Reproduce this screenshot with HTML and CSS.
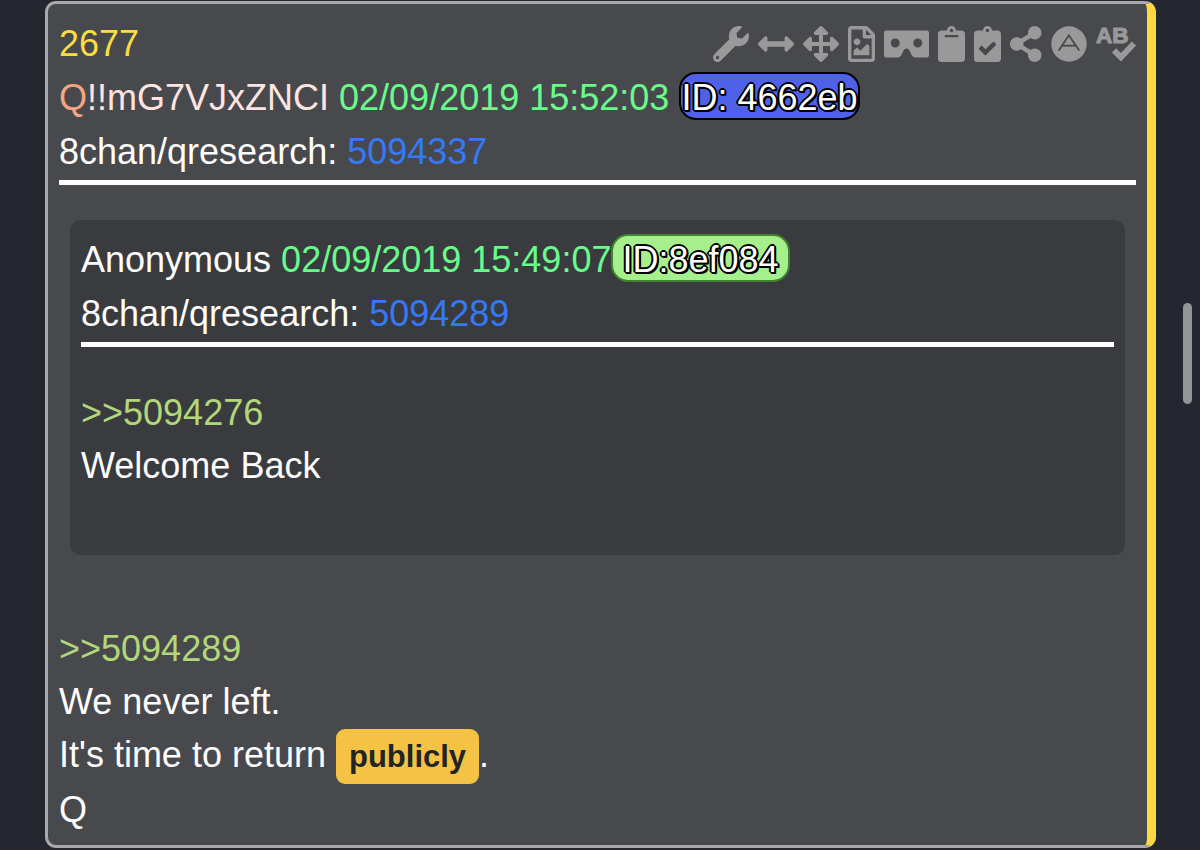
FILE: index.html
```
<!DOCTYPE html>
<html lang="en">
<head>
    <meta charset="UTF-8">
    <meta name="viewport" content="width=device-width, initial-scale=1.0">
    <title>2677</title>
    <link rel="stylesheet" href="styles.css">
</head>
<body>
    <main>
        <article class="post">
            <header class="post-header">
                <div class="top-row">
                    <a class="number" href="#">2677</a>
                    <div class="tools">
                        <button type="button" aria-label="Tools">
                            <svg viewBox="0 0 512 512"><path d="M507.73 109.1c-2.24-9.03-13.54-12.09-20.12-5.51l-74.36 74.36-67.88-11.31-11.31-67.88 74.36-74.36c6.62-6.62 3.43-17.9-5.66-20.16-47.38-11.74-99.55.91-136.58 37.93-39.64 39.64-50.55 97.1-34.05 147.2L18.74 402.76c-24.99 24.99-24.99 65.51 0 90.5 24.99 24.99 65.51 24.99 90.5 0l213.21-213.21c50.12 16.71 107.47 5.68 147.37-34.22 37.07-37.07 49.7-89.32 37.91-136.73zM64 472c-13.25 0-24-10.75-24-24 0-13.26 10.75-24 24-24s24 10.74 24 24c0 13.25-10.75 24-24 24z"/></svg>
                        </button>
                        <button type="button" aria-label="Widen">
                            <svg viewBox="0 0 512 512"><path d="M377.941 169.941V216H134.059v-46.059c0-21.382-25.851-32.09-40.971-16.971L7.029 239.029c-9.373 9.373-9.373 24.568 0 33.941l86.059 86.059c15.119 15.119 40.971 4.411 40.971-16.971V296h243.882v46.059c0 21.382 25.851 32.09 40.971 16.971l86.059-86.059c9.373-9.373 9.373-24.568 0-33.941l-86.059-86.059c-15.119-15.12-40.971-4.412-40.971 16.97z"/></svg>
                        </button>
                        <button type="button" aria-label="Expand">
                            <svg viewBox="0 0 512 512"><path d="M352.201 425.775l-79.196 79.196c-9.373 9.373-24.568 9.373-33.941 0l-79.196-79.196c-15.119-15.119-4.411-40.971 16.971-40.97h51.162L228 284H127.196v51.162c0 21.382-25.851 32.09-40.971 16.971L7.029 272.937c-9.373-9.373-9.373-24.569 0-33.941L86.225 159.8c15.119-15.119 40.971-4.411 40.971 16.971V228H228V127.196h-51.23c-21.382 0-32.09-25.851-16.971-40.971l79.196-79.196c9.373-9.373 24.568-9.373 33.941 0l79.196 79.196c15.119 15.119 4.411 40.971-16.971 40.971h-51.162V228h100.804v-51.162c0-21.382 25.851-32.09 40.97-16.971l79.196 79.196c9.373 9.373 9.373 24.569 0 33.941L425.773 352.2c-15.119 15.119-40.971 4.411-40.97-16.971V284H284v100.804h51.23c21.382 0 32.09 25.851 16.971 40.971z"/></svg>
                        </button>
                        <button type="button" aria-label="Image">
                            <svg viewBox="0 0 384 512"><path d="M369.9 97.9L286 14C277 5 264.8-.1 252.1-.1H48C21.5 0 0 21.5 0 48v416c0 26.5 21.5 48 48 48h288c26.5 0 48-21.5 48-48V131.9c0-12.7-5.1-25-14.1-34zM332.1 128H256V51.9l76.1 76.1zM48 464V48h160v104c0 13.3 10.7 24 24 24h104v288H48zm32-48h224V288l-23.5-23.5c-4.7-4.7-12.3-4.7-17 0L176 352l-39.5-39.5c-4.7-4.7-12.3-4.7-17 0L80 352v64zm48-240c-26.5 0-48 21.5-48 48s21.5 48 48 48 48-21.5 48-48-21.5-48-48-48z"/></svg>
                        </button>
                        <button type="button" aria-label="Viewer">
                            <svg viewBox="0 0 640 512"><path d="M608 64H32C14.33 64 0 78.33 0 96v320c0 17.67 14.33 32 32 32h160.22c25.19 0 48.03-14.77 58.36-37.74l27.74-61.64C286.21 331.08 302.35 320 320 320s33.79 11.08 41.68 28.62l27.74 61.64C399.75 433.23 422.6 448 447.78 448H608c17.67 0 32-14.33 32-32V96c0-17.67-14.33-32-32-32zM160 304c-35.35 0-64-28.65-64-64s28.65-64 64-64 64 28.65 64 64-28.65 64-64 64zm320 0c-35.35 0-64-28.65-64-64s28.65-64 64-64 64 28.65 64 64-28.65 64-64 64z"/></svg>
                        </button>
                        <button type="button" aria-label="Copy">
                            <svg viewBox="0 0 384 512"><path d="M384 112v352c0 26.51-21.49 48-48 48H48c-26.51 0-48-21.49-48-48V112c0-26.51 21.49-48 48-48h80c0-35.29 28.71-64 64-64s64 28.71 64 64h80c26.51 0 48 21.49 48 48zM192 40c-13.255 0-24 10.745-24 24s10.745 24 24 24 24-10.745 24-24-10.745-24-24-24m96 114v-20a6 6 0 0 0-6-6H102a6 6 0 0 0-6 6v20a6 6 0 0 0 6 6h180a6 6 0 0 0 6-6z"/></svg>
                        </button>
                        <button type="button" aria-label="Select">
                            <svg viewBox="0 0 384 512"><path d="M336 64h-80c0-35.3-28.7-64-64-64s-64 28.7-64 64H48C21.5 64 0 85.5 0 112v352c0 26.5 21.5 48 48 48h288c26.5 0 48-21.5 48-48V112c0-26.5-21.5-48-48-48zM192 40c13.3 0 24 10.7 24 24s-10.7 24-24 24-24-10.7-24-24 10.7-24 24-24zm121.2 231.8l-143 141.8c-4.7 4.7-12.3 4.6-17-.1l-82.6-83.3c-4.7-4.7-4.6-12.3.1-17L99.1 285c4.7-4.7 12.3-4.6 17 .1l46 46.4 106-105.2c4.7-4.7 12.3-4.6 17 .1l28.2 28.4c4.7 4.8 4.6 12.3-.1 17z"/></svg>
                        </button>
                        <button type="button" aria-label="Share">
                            <svg viewBox="0 0 448 512"><path d="M352 320c-22.608 0-43.387 7.819-59.79 20.895l-102.486-64.054a96.551 96.551 0 0 0 0-41.683l102.486-64.054C308.613 184.181 329.392 192 352 192c53.019 0 96-42.981 96-96S405.019 0 352 0s-96 42.981-96 96c0 7.158.79 14.13 2.276 20.841L155.79 180.895C139.387 167.819 118.608 160 96 160c-53.019 0-96 42.981-96 96s42.981 96 96 96c22.608 0 43.387-7.819 59.79-20.895l102.486 64.054A96.301 96.301 0 0 0 256 416c0 53.019 42.981 96 96 96s96-42.981 96-96-42.981-96-96-96z"/></svg>
                        </button>
                        <button type="button" aria-label="Archive">
                            <svg viewBox="0 0 512 512">
                                <circle cx="256" cy="256" r="252"/>
                                <g class="mark-lines">
                                    <polyline points="110,350 254,132 402,350"/>
                                    <line x1="160" y1="280" x2="350" y2="280"/>
                                </g>
                            </svg>
                        </button>
                        <button type="button" aria-label="Spelling">
                            <svg viewBox="0 0 576 512">
                                <text class="spell" x="0" y="244">AB</text>
                                <polyline class="tick" points="256,346 355,446 540,248"/>
                            </svg>
                        </button>
                    </div>
                </div>
                <div><span class="name">Q</span><span class="trip">!!mG7VJxZNCI</span> <time class="date">02/09/2019 15:52:03</time> <span class="id id-blue">ID: 4662eb</span></div>
                <div>8chan/qresearch: <a class="link" href="#">5094337</a></div>
            </header>

            <section class="quoted">
                <header class="post-header">
                    <div>Anonymous <time class="date">02/09/2019 15:49:07</time><span class="id id-green">ID:8ef084</span></div>
                    <div>8chan/qresearch: <a class="link" href="#">5094289</a></div>
                </header>
                <div class="text">
                    <a class="ref" href="#">&gt;&gt;5094276</a>
                    <p>Welcome Back</p>
                </div>
            </section>

            <div class="text">
                <a class="ref" href="#">&gt;&gt;5094289</a>
                <p>We never left.</p>
                <p>It's time to return <mark>publicly</mark>.</p>
                <p>Q</p>
            </div>
        </article>
    </main>
    <div class="scroll-thumb"></div>
</body>
</html>
```
FILE: styles.css
```
*, *::before, *::after
{
    box-sizing: border-box;
    margin: 0;
    padding: 0;
}
body
{
    background-color: #24272f;
    color: #fdfdfd;
    font-family: "Liberation Sans", Arial, sans-serif;
    font-size: 36px;
    line-height: 53px;
}
a
{
    text-decoration: none;
}
main
{
    padding: 1px 44px 2px 45px;
}
.post
{
    background-color: #48494d;
    border: 3px solid #a9a8ac;
    border-right: 9px solid #fdd845;
    border-radius: 11px;
    padding: 13px 11px 9px;
}
.post-header
{
    line-height: 54px;
    border-bottom: 5px solid #fff;
    padding-bottom: 1px;
}
.top-row
{
    display: flex;
    justify-content: space-between;
    align-items: center;
}
.number
{
    color: #fbdc43;
}
.tools
{
    display: flex;
    align-items: center;
    gap: 9px;
}
.tools button
{
    display: flex;
    background: none;
    border: none;
    cursor: pointer;
}
.tools svg
{
    height: 36px;
    fill: #999;
    overflow: visible;
}
.tools .mark-lines
{
    fill: none;
    stroke: #48494d;
    stroke-width: 26px;
}
.tools .spell
{
    font-family: "Liberation Sans", Arial, sans-serif;
    font-size: 320px;
    font-weight: bold;
    stroke: #999;
    stroke-width: 16px;
}
.tools .tick
{
    fill: none;
    stroke: #999;
    stroke-width: 84px;
}
.name
{
    color: #f5a582;
}
.trip
{
    color: #fde4e1;
}
.date
{
    color: #68fb8c;
}
.link
{
    color: #3579f6;
}
.ref
{
    display: block;
    color: #b2d67a;
}
.id
{
    display: inline-block;
    line-height: 40px;
    padding-top: 4px;
    border: 2px solid #000;
    border-radius: 17px;
    color: #fff;
    text-shadow: 2px 0 #000, -2px 0 #000, 0 2px #000, 0 -2px #000,
        2px 2px #000, -1px 1px #000, 1px -1px #000, -1px -1px #000;
}
.id-blue
{
    background-color: #4f61e8;
}
.id-green
{
    background-color: #a5f08c;
    border-color: #3f8230;
    padding-left: 9px;
    padding-right: 9px;
}
.quoted
{
    margin: 35px 11px 67px;
    padding: 13px 11px 63px;
    background-color: #3a3b3e;
    border-radius: 11px;
}
.quoted .text
{
    margin-top: 39px;
}
mark
{
    background-color: #f5c343;
    color: #222528;
    font-size: 31px;
    font-weight: bold;
    padding: 10px 13px;
    border-radius: 9px;
}
.scroll-thumb
{
    position: fixed;
    top: 303px;
    right: 8px;
    width: 9px;
    height: 101px;
    border-radius: 5px;
    background-color: #949599;
}
```
